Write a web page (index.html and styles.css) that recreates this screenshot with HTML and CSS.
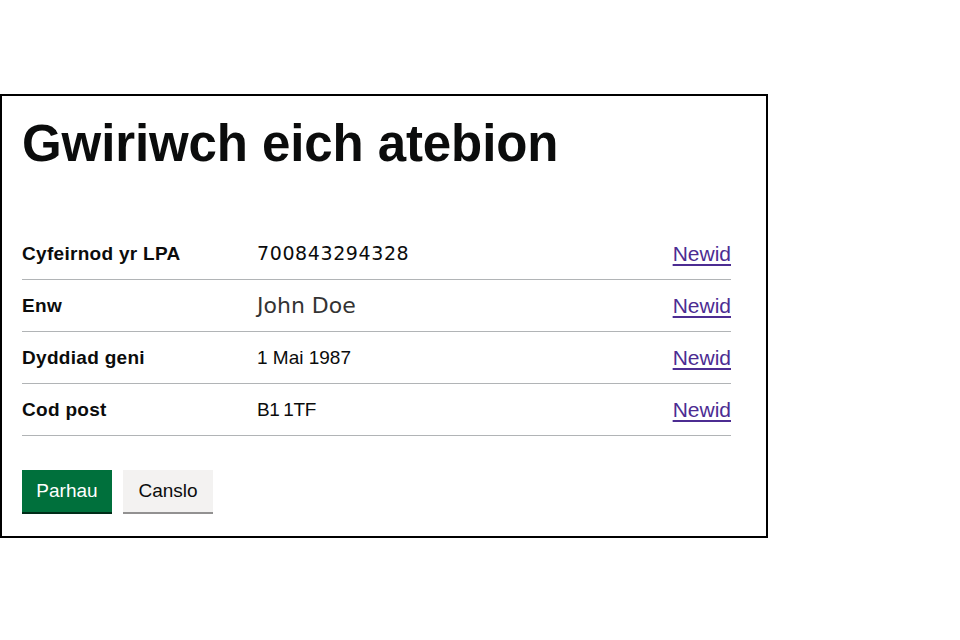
FILE: index.html
```html
<!DOCTYPE html>
<html lang="cy">
<head>
<meta charset="utf-8">
<title>Gwiriwch eich atebion</title>
<link rel="stylesheet" href="styles.css">
</head>
<body>
<div class="page">
  <main class="frame">
    <h1 class="heading">Gwiriwch eich atebion</h1>
    <dl class="summary">
      <div class="row">
        <dt class="key">Cyfeirnod yr LPA</dt>
        <dd class="value value-num">700843294328</dd>
        <dd class="action"><a href="#" class="link">Newid</a></dd>
      </div>
      <div class="row">
        <dt class="key">Enw</dt>
        <dd class="value value-alt">John Doe</dd>
        <dd class="action"><a href="#" class="link">Newid</a></dd>
      </div>
      <div class="row">
        <dt class="key">Dyddiad geni</dt>
        <dd class="value">1 Mai 1987</dd>
        <dd class="action"><a href="#" class="link">Newid</a></dd>
      </div>
      <div class="row">
        <dt class="key">Cod post</dt>
        <dd class="value value-tight">B1 1TF</dd>
        <dd class="action"><a href="#" class="link">Newid</a></dd>
      </div>
    </dl>
    <div class="buttons">
      <button class="btn btn-primary" type="button">Parhau</button>
      <button class="btn btn-secondary" type="button">Canslo</button>
    </div>
  </main>
</div>
</body>
</html>
```

FILE: styles.css
```css
html, body {
  margin: 0;
  padding: 0;
  background: #fff;
}
body {
  font-family: "Liberation Sans", Arial, sans-serif;
  color: #0b0c0c;
}
.page {
  padding-top: 94px;
}
.frame {
  display: block;
  box-sizing: border-box;
  width: 768px;
  height: 444px;
  border: 2px solid #000;
  padding: 0 35px 0 20px;
}
.heading {
  margin: 0;
  padding-top: 20px;
  font-size: 51px;
  line-height: 56px;
  font-weight: 700;
  letter-spacing: -0.1px;
}
.summary {
  margin: 56px 0 0 0;
  padding: 0;
}
.row {
  display: grid;
  grid-template-columns: 235px 1fr auto;
  align-items: center;
  height: 51px;
  border-bottom: 1px solid #b1b4b6;
}
.key, .value, .action {
  margin: 0;
  font-size: 19px;
  line-height: 25px;
}
.key {
  font-weight: 700;
  letter-spacing: 0.3px;
}
.value {
  color: #0b0c0c;
}
.value-num {
  font-family: "DejaVu Sans", sans-serif;
  letter-spacing: 0.6px;
}
.value-tight {
  letter-spacing: -0.4px;
  word-spacing: -1px;
}
.value-alt {
  font-family: "DejaVu Sans", sans-serif;
  font-size: 22px;
  color: #333;
}
.action {
  text-align: right;
}
.link {
  font-size: 21px;
  color: #4c2c92;
  text-decoration: underline;
  text-underline-offset: 3px;
  text-decoration-thickness: 2px;
}
.buttons {
  display: flex;
  gap: 11px;
  margin-top: 34px;
}
.btn {
  font-family: "Liberation Sans", Arial, sans-serif;
  font-size: 19px;
  line-height: 24px;
  border: 0;
  border-radius: 0;
  width: 90px;
  height: 42px;
  padding: 0;
  cursor: pointer;
}
.btn-primary {
  background: #00703c;
  color: #fff;
  box-shadow: 0 2px 0 #002d18;
}
.btn-secondary {
  background: #f3f2f1;
  color: #0b0c0c;
  box-shadow: 0 2px 0 #929191;
}
```
